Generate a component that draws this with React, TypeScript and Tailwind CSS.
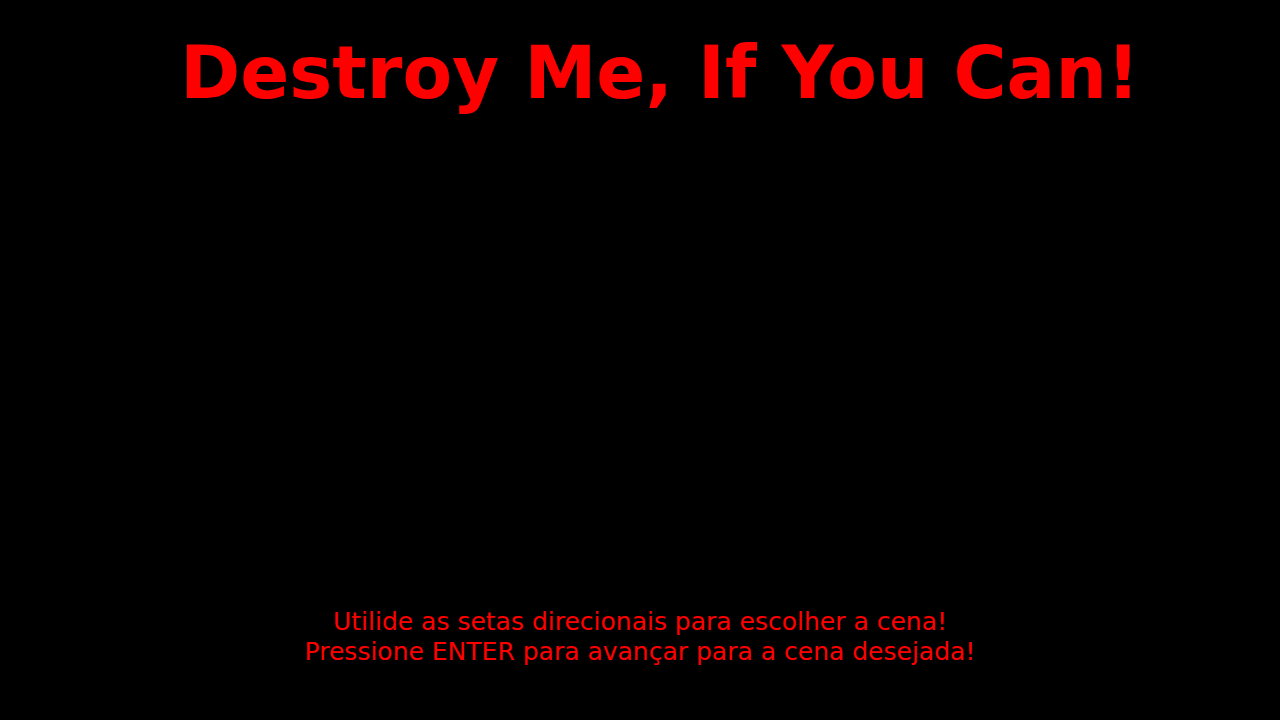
export default function App() {
  return (
    <div className="w-[1280px] h-[720px] bg-black flex flex-col items-center overflow-hidden">
      <h1 className="mt-[37px] ml-[40px] font-['DejaVu_Sans',sans-serif] text-[72.3px] leading-none font-bold text-[#ff0000] whitespace-nowrap">
        Destroy Me, If You Can!
      </h1>
      <div className="mt-auto mb-[53px] flex flex-col items-center font-['DejaVu_Sans',sans-serif] text-[25px] leading-[30px] text-[#ff0000] whitespace-nowrap">
        <p>Utilide as setas direcionais para escolher a cena!</p>
        <p>Pressione ENTER para avançar para a cena desejada!</p>
      </div>
    </div>
  )
}
